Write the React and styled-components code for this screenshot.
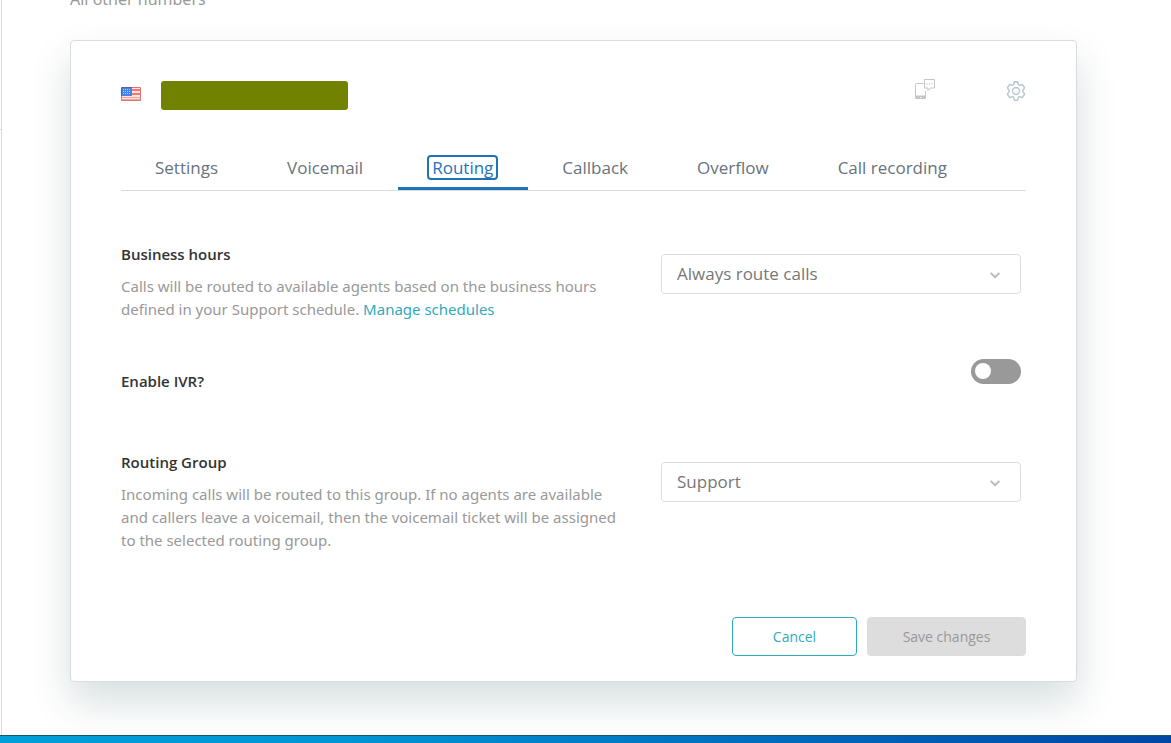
import React, { useState } from 'react';
import styled, { createGlobalStyle } from 'styled-components';

const proseFont = '"Segoe UI", "Noto Sans", sans-serif';

const GlobalStyle = createGlobalStyle`
  *, *::before, *::after { box-sizing: border-box; }
  body {
    margin: 0;
    background: #fff;
    color: #333;
    font-family: "Segoe UI", "Open Sans", "Noto Sans", sans-serif;
    font-size: 15px;
  }
  button, select, input { font-family: inherit; }
`;

const Shell = styled.div`
  display: flex;
  flex-direction: column;
  height: 100vh;
  overflow: hidden;
`;

const Workspace = styled.div`
  flex: 1;
  display: flex;
  min-height: 0;
`;

const SideRail = styled.aside`
  flex: none;
  width: 2px;
  border-right: 1px solid #d8dcde;
`;

const RailItem = styled.div`
  height: 130px;
  border-bottom: 1px solid #d8dcde;
`;

const Main = styled.main`
  flex: 1;
  min-width: 0;
  overflow: hidden;
  padding: 0 94px 0 68px;
`;

const SectionHeading = styled.h2`
  margin: -13px 0 29px;
  color: #999;
  font-family: ${proseFont};
  font-size: 16px;
  font-weight: 400;
  line-height: 24px;
`;

const Card = styled.section`
  padding: 40px 50px 25px;
  background: #fff;
  border: 1px solid #d8dcde;
  border-radius: 4px;
  box-shadow: 0 20px 40px 0 rgba(4, 52, 53, 0.16);
`;

const CardHeader = styled.header`
  display: flex;
  align-items: center;
  height: 29px;
  margin-bottom: 45px;
`;

const Flag = styled.span`
  display: flex;
  padding-bottom: 4px;
`;

const NumberMask = styled.div`
  width: 187px;
  height: 29px;
  margin-left: 20px;
  background: #708200;
  border-radius: 3px;
`;

const HeaderActions = styled.div`
  display: flex;
  align-self: flex-start;
  gap: 70px;
  margin-left: auto;
`;

const IconButton = styled.button`
  display: flex;
  padding: 0;
  border: 0;
  background: none;
  color: ${({ $color }) => $color};
`;

const TabList = styled.nav`
  display: flex;
  border-bottom: 1px solid #d8dcde;
`;

const Tab = styled.button`
  flex: none;
  padding: 0 30px 7px 29px;
  border: 0;
  border-bottom: 3px solid ${({ $active }) => ($active ? '#1f73b7' : 'transparent')};
  background: none;
  color: ${({ $active }) => ($active ? '#1f73b7' : '#68737d')};
  font-size: 17px;
  line-height: 20px;
  outline: none;
`;

const TabLabel = styled.span`
  display: block;
  padding: 1px 3px 0;
  border: 2px solid ${({ $active }) => ($active ? '#1f73b7' : 'transparent')};
  border-radius: 4px;
`;

const Form = styled.form`
  margin-top: 51px;
`;

const Row = styled.div`
  display: flex;
  justify-content: space-between;
  gap: 30px;
  margin-top: ${({ $gap }) => $gap || 0}px;
  padding-right: 5px;
`;

const RowText = styled.div`
  flex: 1;
  padding-top: ${({ $inset }) => $inset || 0}px;
`;

const Title = styled.label`
  display: block;
  color: #333;
  font-weight: 600;
  line-height: 24px;
`;

const Description = styled.p`
  margin: 9px 0 0;
  color: #999;
  font-family: ${proseFont};
  line-height: 23px;
`;

const TextLink = styled.a`
  color: #30aabc;
  text-decoration: none;
`;

const SelectWrap = styled.div`
  position: relative;
  flex: none;
  width: 360px;
  margin-top: 12px;

  svg {
    position: absolute;
    top: 18px;
    right: 21px;
    pointer-events: none;
  }
`;

const Select = styled.select`
  appearance: none;
  display: block;
  width: 100%;
  height: 40px;
  padding: 0 40px 1px 15px;
  border: 1px solid #ddd;
  border-radius: 4px;
  background: #fff;
  color: #777;
  font-size: 17px;
`;

const Toggle = styled.input`
  appearance: none;
  flex: none;
  display: flex;
  width: 50px;
  height: 25px;
  margin: 0;
  padding: 4px;
  border-radius: 13px;
  background: ${({ checked }) => (checked ? '#30aabc' : '#999')};
  justify-content: ${({ checked }) => (checked ? 'flex-end' : 'flex-start')};

  &::before {
    content: '';
    width: 16px;
    height: 16px;
    border-radius: 50%;
    background: #fff;
  }
`;

const Footer = styled.footer`
  display: flex;
  justify-content: flex-end;
  gap: 10px;
  margin-top: 65px;
`;

const Button = styled.button`
  width: ${({ $wide }) => ($wide ? 159 : 125)}px;
  height: 39px;
  padding: 0;
  border: 1px solid #30aabc;
  border-radius: 4px;
  background: #fff;
  color: #30aabc;
  font-size: 14px;

  &:disabled {
    border-color: #ddd;
    background: #ddd;
    color: #999;
  }
`;

const Taskbar = styled.div`
  flex: none;
  height: 8px;
  border-top: 1px solid #1c5266;
  background: linear-gradient(90deg, #009fda 0%, #0095d5 30%, #0070bf 62%, #0047a5 100%);
`;

const FlagIcon = () => (
  <svg width="20" height="14" viewBox="0 0 20 14" role="img" aria-label="United States">
    <rect width="20" height="14" fill="#fbe6e2" />
    <path d="M11 2h9v2h-9zM11 6h9v2h-9z" fill="#fb7670" />
    <path d="M0 10h20v1H0zM0 12h20v2H0z" fill="#f3a397" />
    <rect x="1" y="1" width="10" height="8" fill="#4484e8" />
    {[2, 4, 6].map((y) => (
      <path key={y} d={`M2 ${y + 0.5}h8`} stroke="#a9cdfb" strokeWidth="1" strokeDasharray="1 1" />
    ))}
    <path d="M.5 9V.5H11" fill="none" stroke="#5860ad" />
    <path d="M11 .5h8.500v13H.5V9" fill="none" stroke="#d8796e" />
  </svg>
);

const PhoneChatIcon = () => (
  <svg width="21" height="20" viewBox="0 1 21 20" fill="none" stroke="currentColor" overflow="visible">
    <path d="M8.500 3.500H1.500a1 1 0 0 0-1 1v13a1 1 0 0 0 1 1h8a1 1 0 0 0 1-1V11" />
    <path d="M.5 16h10v1.500a1 1 0 0 1-1 1h-8a1 1 0 0 1-1-1z" fill="currentColor" />
    <path d="M5 17.500h1.500" stroke="#fff" />
    <path d="M9.500-.5h10v8.500h-4L13 10.500V8H9.500z" />
    <path d="M11.300 3.800h1.300M13.900 3.800h1.300M16.500 3.800h1.300" />
  </svg>
);

const GearIcon = () => (
  <svg width="20" height="20" viewBox="0 0 20 20" fill="none" stroke="currentColor" strokeWidth="1.400" strokeLinejoin="round">
    <circle cx="10" cy="10" r="3.500" />
    <path d="M8 1.400Q8 .7 8.700.7h2.600q.7 0 .7.700v1.200q0 1.600 1.800 1.600.8 0 1.700-.6.700-.4 1.100.2l1.800 2.700q.4.700-.2 1.200l-.8.700q-1.200 1.600 0 3.200l.8.700q.6.500.2 1.200l-1.800 2.700q-.4.600-1.100.2-.9-.6-1.700-.6-1.800 0-1.800 1.600v1.200q0 .7-.7.700H8.700q-.7 0-.7-.7v-1.200q0-1.600-1.800-1.600-.8 0-1.700.6-.7.400-1.100-.2l-1.800-2.700q-.4-.7.200-1.200l.8-.7q1.200-1.600 0-3.200l-.8-.7q-.6-.5-.2-1.200l1.800-2.700q.4-.6 1.100-.2.9.6 1.700.6Q8 4.200 8 2.600z" />
  </svg>
);

const Chevron = () => (
  <svg width="10" height="7" viewBox="0 0 10 7" fill="none" stroke="#bbb" strokeWidth="2">
    <path d="M.7 1 5 5.200 9.300 1" />
  </svg>
);

const tabs = ['Settings', 'Voicemail', 'Routing', 'Callback', 'Overflow', 'Call recording'];

export default function App() {
  const [active, setActive] = useState('Routing');
  const [ivr, setIvr] = useState(false);

  return (
    <Shell>
      <GlobalStyle />
      <Workspace>
        <SideRail>
          <RailItem />
        </SideRail>
        <Main>
          <SectionHeading>All other numbers</SectionHeading>
          <Card>
            <CardHeader>
              <Flag>
                <FlagIcon />
              </Flag>
              <NumberMask />
              <HeaderActions>
                <IconButton type="button" aria-label="Text messaging" $color="#c4c4c4">
                  <PhoneChatIcon />
                </IconButton>
                <IconButton type="button" aria-label="Number settings" $color="#b5c8cc">
                  <GearIcon />
                </IconButton>
              </HeaderActions>
            </CardHeader>
            <TabList>
              {tabs.map((name) => (
                <Tab key={name} type="button" $active={name === active} onClick={() => setActive(name)}>
                  <TabLabel $active={name === active}>{name}</TabLabel>
                </Tab>
              ))}
            </TabList>
            <Form onSubmit={(e) => e.preventDefault()}>
              <Row>
                <RowText>
                  <Title htmlFor="hours">Business hours</Title>
                  <Description>
                    Calls will be routed to available agents based on the business hours defined in
                    your Support schedule. <TextLink href="#schedules">Manage schedules</TextLink>
                  </Description>
                </RowText>
                <SelectWrap>
                  <Select id="hours">
                    <option>Always route calls</option>
                  </Select>
                  <Chevron />
                </SelectWrap>
              </Row>
              <Row $gap={38}>
                <RowText $inset={10}>
                  <Title htmlFor="ivr">Enable IVR?</Title>
                </RowText>
                <Toggle id="ivr" type="checkbox" checked={ivr} onChange={(e) => setIvr(e.target.checked)} />
              </Row>
              <Row $gap={57}>
                <RowText>
                  <Title htmlFor="group">Routing Group</Title>
                  <Description>
                    Incoming calls will be routed to this group. If no agents are available and
                    callers leave a voicemail, then the voicemail ticket will be assigned to the
                    selected routing group.
                  </Description>
                </RowText>
                <SelectWrap>
                  <Select id="group">
                    <option>Support</option>
                  </Select>
                  <Chevron />
                </SelectWrap>
              </Row>
              <Footer>
                <Button type="button">Cancel</Button>
                <Button type="submit" $wide disabled>
                  Save changes
                </Button>
              </Footer>
            </Form>
          </Card>
        </Main>
      </Workspace>
      <Taskbar />
    </Shell>
  );
}
